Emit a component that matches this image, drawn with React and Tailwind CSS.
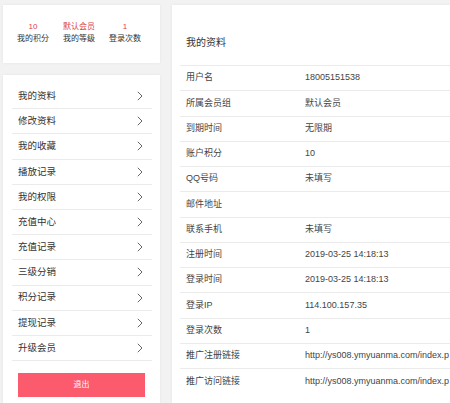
import React from "react";

const menu = ["我的资料","修改资料","我的收藏","播放记录","我的权限","充值中心","充值记录","三级分销","积分记录","提现记录","升级会员"];
const rows = [
  ["用户名","18005151538"],
  ["所属会员组","默认会员"],
  ["到期时间","无限期"],
  ["账户积分","10"],
  ["QQ号码","未填写"],
  ["邮件地址",""],
  ["联系手机","未填写"],
  ["注册时间","2019-03-25 14:18:13"],
  ["登录时间","2019-03-25 14:18:13"],
  ["登录IP","114.100.157.35"],
  ["登录次数","1"],
  ["推广注册链接","http://ys008.ymyuanma.com/index.p"],
  ["推广访问链接","http://ys008.ymyuanma.com/index.p"],
];

function Chevron() {
  return (
    <svg width="6" height="10" viewBox="0 0 6 10" className="shrink-0">
      <polyline points="0.8,0.8 5,5 0.8,9.2" fill="none" stroke="#666" strokeWidth="1" />
    </svg>
  );
}

export default function App() {
  return (
    <div
      className="w-[450px] h-[403px] overflow-hidden bg-[#f2f2f2] flex gap-[12px] pl-[3px] pt-[5px] text-[#333]"
      style={{ fontFamily: '"Liberation Sans", "Noto Sans CJK SC", sans-serif' }}
    >
      <div className="w-[157px] shrink-0 flex flex-col gap-[12px]">
        <div className="h-[58px] bg-white shadow-[0_0_3px_rgba(0,0,0,0.06)] flex items-center pl-[14px] gap-[14px] pb-[3px]">
          {[["10","我的积分"],["默认会员","我的等级"],["1","登录次数"]].map(([v,l]) => (
            <div key={l} className="flex flex-col items-center leading-[12px] whitespace-nowrap">
              <div className="text-[8px] text-[#d9434f]">{v}</div>
              <div className="text-[8px] text-[#333]">{l}</div>
            </div>
          ))}
        </div>
        <div className="flex-1 bg-white shadow-[0_0_3px_rgba(0,0,0,0.06)] pt-[9px] pl-[9px] pr-[8px]">
          {menu.map((m) => (
            <div key={m} className="h-[25.2px] border-b border-[#ebebeb] flex items-center justify-between pl-[6px] pr-[9px]">
              <span className="text-[9.5px] text-[#333]">{m}</span>
              <Chevron />
            </div>
          ))}
          <div className="mt-[12px] ml-[6px] w-[127px] h-[24px] bg-[#fb5b6c] flex items-center justify-center text-white text-[8px]">
            退出
          </div>
        </div>
      </div>
      <div className="flex-1 min-w-0 bg-white shadow-[0_0_3px_rgba(0,0,0,0.06)] pl-[8px]">
        <div className="h-[60px] flex items-end pb-[16px] pl-[6px] text-[10px] leading-[12px] text-[#333]">
          我的资料
        </div>
        <div className="border-t border-[#ebebeb]">
          {rows.map(([l, v], i) => (
            <div
              key={l}
              className={`h-[25.25px] flex items-center pl-[6px] text-[9px] whitespace-nowrap overflow-hidden ${i < rows.length - 1 ? "border-b border-[#ebebeb]" : ""}`}
            >
              <span className="w-[119px] shrink-0 text-[#444]">{l}</span>
              <span className="text-[#444]">{v}</span>
            </div>
          ))}
        </div>
      </div>
    </div>
  );
}
